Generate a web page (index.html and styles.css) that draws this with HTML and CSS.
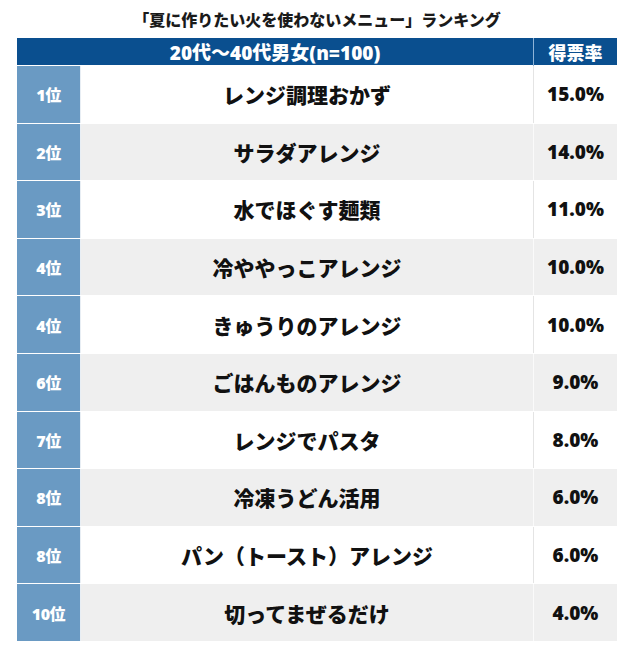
FILE: index.html
```html
<!DOCTYPE html>
<html lang="ja">
<head>
<meta charset="utf-8">
<title>ランキング</title>
<link rel="stylesheet" href="styles.css">
</head>
<body>
<div class="page">
  <h1 class="title">「夏に作りたい火を使わないメニュー」ランキング</h1>
  <div class="table">
    <div class="head">
      <div class="head-main">20代〜40代男女(n=100)</div>
      <div class="head-rate">得票率</div>
    </div>
    <div class="row"><div class="rank">1位</div><div class="name">レンジ調理おかず</div><div class="rate">15.0%</div></div>
    <div class="row alt"><div class="rank">2位</div><div class="name">サラダアレンジ</div><div class="rate">14.0%</div></div>
    <div class="row"><div class="rank">3位</div><div class="name">水でほぐす麺類</div><div class="rate">11.0%</div></div>
    <div class="row alt"><div class="rank">4位</div><div class="name">冷ややっこアレンジ</div><div class="rate">10.0%</div></div>
    <div class="row"><div class="rank">4位</div><div class="name">きゅうりのアレンジ</div><div class="rate">10.0%</div></div>
    <div class="row alt"><div class="rank">6位</div><div class="name">ごはんものアレンジ</div><div class="rate">9.0%</div></div>
    <div class="row"><div class="rank">7位</div><div class="name">レンジでパスタ</div><div class="rate">8.0%</div></div>
    <div class="row alt"><div class="rank">8位</div><div class="name">冷凍うどん活用</div><div class="rate">6.0%</div></div>
    <div class="row"><div class="rank">8位</div><div class="name">パン（トースト）アレンジ</div><div class="rate">6.0%</div></div>
    <div class="row alt"><div class="rank">10位</div><div class="name">切ってまぜるだけ</div><div class="rate">4.0%</div></div>
  </div>
</div>
</body>
</html>
```
FILE: styles.css
```css
html, body {
  margin: 0;
  padding: 0;
  background: #ffffff;
}
body {
  font-family: "Noto Sans CJK JP", sans-serif;
  color: #111111;
}
.page {
  width: 640px;
  padding-left: 17px;
  box-sizing: border-box;
}
.title {
  margin: 0;
  width: 600px;
  height: 38px;
  line-height: 38px;
  text-align: center;
  font-size: 16px;
  font-weight: 900;
  color: #1a1a1a;
}
.table {
  width: 600px;
}
.head {
  display: grid;
  grid-template-columns: 516px 84px;
  height: 27px;
  background: #0a4f8f;
  color: #ffffff;
}
.head-main, .head-rate {
  display: flex;
  align-items: center;
  justify-content: center;
  font-family: "Open Sans", "Noto Sans CJK JP", sans-serif;
  font-weight: 800;
  font-size: 18px;
}
.head-main {
  font-size: 19px;
}
.head-rate {
  border-left: 1px solid #8fb4d8;
}
.row {
  display: grid;
  grid-template-columns: 63px 453px 84px;
  height: 57.6px;
  background: #ffffff;
  box-sizing: border-box;
  border-top: 1.5px solid #ffffff;
}
.row.alt {
  background: #efefef;
}
.rank {
  display: flex;
  align-items: center;
  justify-content: center;
  background: #6a9ac3;
  color: #ffffff;
  font-family: "Open Sans", "Noto Sans CJK JP", sans-serif;
  font-weight: 800;
  font-size: 16px;
  letter-spacing: -0.5px;
}
.name {
  display: flex;
  align-items: center;
  justify-content: center;
  border-left: 1px solid #e8eef4;
  font-family: "Noto Sans CJK JP", sans-serif;
  font-weight: 900;
  font-size: 21px;
  color: #111111;
}
.rate {
  display: flex;
  align-items: center;
  justify-content: center;
  border-left: 1px solid #e4e4e4;
  font-family: "Open Sans", "Noto Sans CJK JP", sans-serif;
  font-weight: 800;
  font-size: 19px;
  color: #111111;
}
.row.alt .rate {
  border-left-color: #fafafa;
}
```
